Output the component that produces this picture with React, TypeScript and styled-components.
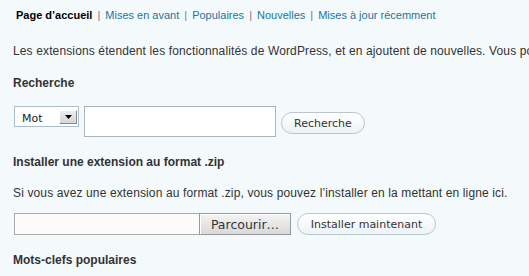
import React from 'react'
import styled, { createGlobalStyle } from 'styled-components'

const GlobalStyle = createGlobalStyle`
  html, body {
    margin: 0;
    padding: 0;
    background: #f4f9fc;
    overflow: hidden;
  }
  body {
    font-family: "Liberation Sans", Arial, sans-serif;
    color: #333;
  }
`

const tabs = ['Mises en avant', 'Populaires', 'Nouvelles', 'Mises à jour récemment']

const App = (): JSX.Element => {
  return (
    <>
      <GlobalStyle />
      <Wrap>
        <SubNav>
          <Current>Page d’accueil</Current>
          {tabs.map((t) => (
            <React.Fragment key={t}>
              <Sep>|</Sep>
              <NavLink href="#">{t}</NavLink>
            </React.Fragment>
          ))}
        </SubNav>

        <Intro>
          Les extensions étendent les fonctionnalités de WordPress, et en ajoutent de nouvelles. Vous pouvez installer
          automatiquement des extensions depuis le répertoire officiel.
        </Intro>

        <Title>Recherche</Title>
        <SearchRow>
          <SelectBox>
            <SelectText>Mot</SelectText>
            <ArrowButton>
              <svg width="7" height="4" viewBox="0 0 7 4">
                <path d="M0 0h7L3.5 4z" fill="#000" />
              </svg>
            </ArrowButton>
          </SelectBox>
          <SearchInput type="text" />
          <PillButton>Recherche</PillButton>
        </SearchRow>

        <Title>Installer une extension au format .zip</Title>
        <Text>
          Si vous avez une extension au format .zip, vous pouvez l’installer en la mettant en ligne ici.
        </Text>
        <UploadRow>
          <FileField>
            <FileText />
            <BrowseButton>Parcourir…</BrowseButton>
          </FileField>
          <PillButton>Installer maintenant</PillButton>
        </UploadRow>

        <Title>Mots-clefs populaires</Title>
      </Wrap>
    </>
  )
}

export default App

const Wrap = styled.div`
padding:8px 0 0 13px;
width:1000px;
`
const SubNav = styled.div`
display:flex;
align-items:baseline;
padding-left:3px;
font-size:11px;
line-height:15px;
white-space:nowrap;
`
const Current = styled.span`
font-weight:bold;
color:#000;
`
const Sep = styled.span`
margin:0 5px;
color:#777;
`
const NavLink = styled.a`
color:#21759b;
text-decoration:none;
`
const Text = styled.p`
margin:15px 0 0;
font-size:12px;
line-height:16px;
letter-spacing:0.13px;
color:#333;
white-space:nowrap;
`
const Intro = styled(Text)`
margin-top:20px;
`
const Title = styled.h4`
margin:16px 0 0;
font-size:12px;
line-height:16px;
font-weight:bold;
color:#333;
`
const SearchRow = styled.div`
display:flex;
align-items:flex-start;
margin:15px 0 17px;
gap:5px;
`
const SelectBox = styled.div`
box-sizing:border-box;
width:65px;
height:21px;
display:flex;
align-items:flex-start;
justify-content:space-between;
border:1px solid #a7bfcd;
background:#fff;
padding:3px 1px 0 7px;
margin-left:1px;
`
const SelectText = styled.span`
margin-top:2px;
font-family:"DejaVu Sans", Verdana, sans-serif;
font-size:11px;
line-height:14px;
color:#222;
`
const ArrowButton = styled.span`
box-sizing:border-box;
width:18px;
height:14px;
display:flex;
align-items:center;
justify-content:center;
background:linear-gradient(#ececec, #d6d6d6);
border:1px solid;
border-color:#fff #8a8a8a #8a8a8a #fff;
`
const SearchInput = styled.input`
box-sizing:border-box;
width:192px;
height:31px;
margin:0;
border:1px solid #aab4ba;
background:#fff;
outline:none;
`
const PillButton = styled.button`
box-sizing:border-box;
height:22px;
margin:6px 0 0;
padding:0 12px;
border:1px solid #b8c8d2;
border-radius:11px;
background:linear-gradient(#ffffff, #eef2f5);
font-family:"DejaVu Sans", Verdana, sans-serif;
font-size:11px;
color:#333;
cursor:pointer;
`
const UploadRow = styled.div`
display:flex;
align-items:flex-start;
gap:6px;
margin:12px 0 17px;
${PillButton}{
  margin-top:0;
  width:139px;
}
`
const FileField = styled.div`
display:flex;
height:22px;
`
const FileText = styled.div`
box-sizing:border-box;
width:185px;
height:22px;
margin-left:1px;
border:1px solid #aaa;
border-right:none;
background:#fcfafa;
`
const BrowseButton = styled.button`
box-sizing:border-box;
width:92px;
height:22px;
margin:0;
padding:0;
border:1px solid #999;
box-shadow:inset 1px 1px 0 #fff;
background:linear-gradient(#f4f4f4, #d9d9d9);
font-family:"DejaVu Sans", Verdana, sans-serif;
font-size:12.5px;
color:#333;
`
